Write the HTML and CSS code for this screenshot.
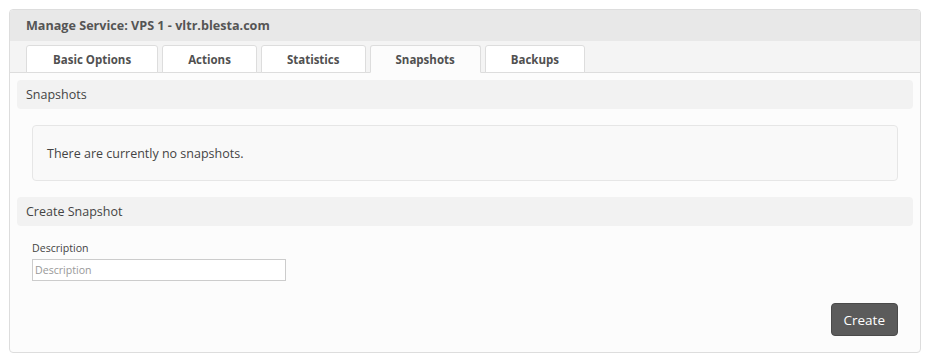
FILE: index.html
```html
<!DOCTYPE html>
<html lang="en">
<head>
    <meta charset="UTF-8">
    <title>Manage Service</title>
    <link rel="stylesheet" href="styles.css">
</head>
<body>
    <div class="panel">
        <div class="panel-heading">Manage Service: VPS 1 - vltr.blesta.com</div>
        <div class="tabs">
            <div class="tab">Basic Options</div>
            <div class="tab">Actions</div>
            <div class="tab">Statistics</div>
            <div class="tab active">Snapshots</div>
            <div class="tab">Backups</div>
        </div>
        <div class="panel-body">
            <div class="section-title">Snapshots</div>
            <div class="empty">There are currently no snapshots.</div>

            <div class="section-title">Create Snapshot</div>
            <form class="snapshot-form">
                <label for="description">Description</label>
                <input type="text" id="description" name="description" placeholder="Description">
                <div class="actions">
                    <button type="submit" class="btn">Create</button>
                </div>
            </form>
        </div>
    </div>
</body>
</html>
```

FILE: styles.css
```css
* {
    margin: 0;
    padding: 0;
    box-sizing: border-box;
    font-family: "Open Sans", sans-serif;
}

body {
    background: #fff;
    padding: 9px;
}

.panel {
    width: 912px;
    border: 1px solid #ddd;
    border-radius: 4px;
    background: #fcfcfc;
    overflow: hidden;
}

.panel-heading {
    height: 31px;
    padding: 0 16px;
    display: flex;
    align-items: center;
    background: #e8e8e8;
    color: #555;
    font-size: 12.6px;
    font-weight: 700;
}

.tabs {
    display: flex;
    gap: 4px;
    padding: 4px 16px 0;
    background: #f4f4f4;
    border-bottom: 1px solid #ddd;
    height: 32px;
}

.tab {
    height: 28px;
    padding: 0 25px;
    display: flex;
    align-items: center;
    justify-content: center;
    background: #fff;
    border: 1px solid #ddd;
    border-radius: 3px 3px 0 0;
    color: #505050;
    font-size: 11.5px;
    font-weight: 700;
}

.tab:first-child {
    padding: 0 26px;
}

.tab.active {
    border-bottom-color: #fcfcfc;
    background: #fcfcfc;
}

.panel-body {
    padding: 7px 7px 16px;
}

.section-title {
    height: 29px;
    padding: 0 9px;
    display: flex;
    align-items: center;
    background: #f2f2f2;
    border-radius: 4px;
    color: #444;
    font-size: 12.5px;
}

.empty {
    margin: 16px 15px;
    height: 56px;
    padding: 0 14px;
    display: flex;
    align-items: center;
    background: #f9f9f9;
    border: 1px solid #e6e6e6;
    border-radius: 4px;
    color: #444;
    font-size: 12.5px;
}

.snapshot-form {
    padding: 15px 15px 0;
}

label {
    display: block;
    font-size: 10.6px;
    color: #444;
    margin-bottom: 2px;
}

input {
    width: 254px;
    height: 22px;
    padding: 0 2px;
    border: 1px solid #ccc;
    background: #fff;
    font-size: 10.6px;
    color: #444;
}

input::placeholder {
    color: #999;
}

.actions {
    display: flex;
    justify-content: flex-end;
    margin-top: 22px;
}

.btn {
    height: 33px;
    padding: 0 12px;
    background: #5b5b5b;
    border: 1px solid #4a4a4a;
    border-radius: 4px;
    color: #fff;
    font-size: 13.5px;
}
```
